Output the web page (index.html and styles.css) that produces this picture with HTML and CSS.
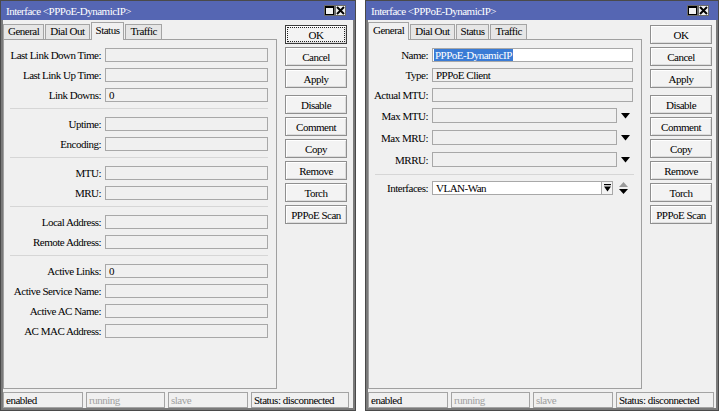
FILE: index.html
```html
<!DOCTYPE html>
<html>
<head>
<meta charset="utf-8">
<title>Interface PPPoE-DynamicIP</title>
<link rel="stylesheet" href="styles.css">
</head>
<body>
<div class="desk">

  <div class="window win-left">
    <div class="titlebar">
      <span class="title">Interface &lt;PPPoE-DynamicIP&gt;</span>
      <div class="tbtns">
        <span class="tb"><svg width="9" height="9" viewBox="0 0 9 9"><rect x="0.5" y="0.5" width="8" height="8" fill="none" stroke="#000"/><rect x="0" y="0" width="9" height="2" fill="#000"/></svg></span>
        <span class="tb"><svg width="9" height="9" viewBox="0 0 9 9"><path d="M1 1L8 8M8 1L1 8" stroke="#000" stroke-width="2"/></svg></span>
      </div>
    </div>
    <div class="client">
      <div class="main">
        <div class="leftcol">
          <div class="tabs">
            <span class="tab">General</span>
            <span class="tab">Dial Out</span>
            <span class="tab active">Status</span>
            <span class="tab">Traffic</span>
          </div>
          <div class="panel panel-status">
            <div class="row"><span class="lbl">Last Link Down Time:</span><span class="field"></span></div>
            <div class="row"><span class="lbl">Last Link Up Time:</span><span class="field"></span></div>
            <div class="row"><span class="lbl">Link Downs:</span><span class="field">0</span></div>
            <div class="sep"></div>
            <div class="row"><span class="lbl">Uptime:</span><span class="field"></span></div>
            <div class="row"><span class="lbl">Encoding:</span><span class="field"></span></div>
            <div class="sep"></div>
            <div class="row"><span class="lbl">MTU:</span><span class="field"></span></div>
            <div class="row"><span class="lbl">MRU:</span><span class="field"></span></div>
            <div class="sep"></div>
            <div class="row"><span class="lbl">Local Address:</span><span class="field"></span></div>
            <div class="row"><span class="lbl">Remote Address:</span><span class="field"></span></div>
            <div class="sep"></div>
            <div class="row"><span class="lbl">Active Links:</span><span class="field">0</span></div>
            <div class="row"><span class="lbl">Active Service Name:</span><span class="field"></span></div>
            <div class="row"><span class="lbl">Active AC Name:</span><span class="field"></span></div>
            <div class="row"><span class="lbl">AC MAC Address:</span><span class="field"></span></div>
          </div>
        </div>
        <div class="buttons">
          <button class="btn focused">OK</button>
          <button class="btn">Cancel</button>
          <button class="btn">Apply</button>
          <button class="btn gap">Disable</button>
          <button class="btn">Comment</button>
          <button class="btn">Copy</button>
          <button class="btn">Remove</button>
          <button class="btn">Torch</button>
          <button class="btn">PPPoE Scan</button>
        </div>
      </div>
      <div class="statusbar">
        <span class="cell">enabled</span>
        <span class="cell dim">running</span>
        <span class="cell dim">slave</span>
        <span class="cell">Status: disconnected</span>
      </div>
    </div>
  </div>

  <div class="window win-right">
    <div class="titlebar">
      <span class="title">Interface &lt;PPPoE-DynamicIP&gt;</span>
      <div class="tbtns">
        <span class="tb"><svg width="9" height="9" viewBox="0 0 9 9"><rect x="0.5" y="0.5" width="8" height="8" fill="none" stroke="#000"/><rect x="0" y="0" width="9" height="2" fill="#000"/></svg></span>
        <span class="tb"><svg width="9" height="9" viewBox="0 0 9 9"><path d="M1 1L8 8M8 1L1 8" stroke="#000" stroke-width="2"/></svg></span>
      </div>
    </div>
    <div class="client">
      <div class="main">
        <div class="leftcol">
          <div class="tabs">
            <span class="tab active first">General</span>
            <span class="tab">Dial Out</span>
            <span class="tab">Status</span>
            <span class="tab">Traffic</span>
          </div>
          <div class="panel panel-general">
            <div class="row"><span class="lbl">Name:</span><span class="field edit wide"><span class="sel">PPPoE-DynamicIP</span></span></div>
            <div class="row"><span class="lbl">Type:</span><span class="field wide">PPPoE Client</span></div>
            <div class="row"><span class="lbl">Actual MTU:</span><span class="field wide"></span></div>
            <div class="row drop"><span class="lbl">Max MTU:</span><span class="field dd"></span><span class="arrow"><svg width="9" height="6" viewBox="0 0 9 6"><path d="M0 0H9L4.5 5.5Z" fill="#000"/></svg></span></div>
            <div class="row drop"><span class="lbl">Max MRU:</span><span class="field dd"></span><span class="arrow"><svg width="9" height="6" viewBox="0 0 9 6"><path d="M0 0H9L4.5 5.5Z" fill="#000"/></svg></span></div>
            <div class="row drop"><span class="lbl">MRRU:</span><span class="field dd"></span><span class="arrow"><svg width="9" height="6" viewBox="0 0 9 6"><path d="M0 0H9L4.5 5.5Z" fill="#000"/></svg></span></div>
            <div class="sep sep-r"></div>
            <div class="row"><span class="lbl">Interfaces:</span><span class="field edit ifc">VLAN-Wan</span><span class="ddbox"><svg width="7" height="8" viewBox="0 0 7 8"><path d="M0 0H7V1.2H0Z" fill="#000"/><path d="M0 2.5H7L3.5 7.5Z" fill="#000"/></svg></span><span class="arrow updown"><svg width="9" height="12" viewBox="0 0 9 12"><path d="M4.5 0L9 5H0Z" fill="#9a9a9a"/><path d="M0 7H9L4.5 12Z" fill="#000"/></svg></span></div>
          </div>
        </div>
        <div class="buttons">
          <button class="btn">OK</button>
          <button class="btn">Cancel</button>
          <button class="btn">Apply</button>
          <button class="btn gap">Disable</button>
          <button class="btn">Comment</button>
          <button class="btn">Copy</button>
          <button class="btn">Remove</button>
          <button class="btn">Torch</button>
          <button class="btn">PPPoE Scan</button>
        </div>
      </div>
      <div class="statusbar">
        <span class="cell">enabled</span>
        <span class="cell dim">running</span>
        <span class="cell dim">slave</span>
        <span class="cell">Status: disconnected</span>
      </div>
    </div>
  </div>

</div>
</body>
</html>
```

FILE: styles.css
```css
* { box-sizing: border-box; }

body {
  margin: 0;
  background: #ffffff;
  font-family: "Liberation Serif", "DejaVu Serif", serif;
  font-size: 11px;
  letter-spacing: -0.5px;
  color: #000;
}

.desk {
  display: flex;
  gap: 9px;
}

.window {
  height: 411px;
  display: flex;
  flex-direction: column;
  border: 1px solid #4a4a4a;
  background: #f0f0f0;
}
.win-left { width: 356px; }
.win-right { width: 354px; }

.titlebar {
  flex: none;
  height: 19px;
  background: #5566b3;
  color: #fff;
  display: flex;
  align-items: center;
  justify-content: space-between;
  padding: 0 9px 0 5px;
}
.title { white-space: nowrap; }

.tbtns { display: flex; }
.tb {
  width: 11px;
  height: 11px;
  background: #f2f2f2;
  border: 1px solid #6a6a6a;
  display: flex;
  align-items: center;
  justify-content: center;
}

.client {
  flex: 1;
  display: flex;
  flex-direction: column;
  border: 2px solid #7a7a7a;
  border-top: 0;
  padding-top: 2px;
}

.main {
  flex: 1;
  display: flex;
  min-height: 0;
}

.leftcol {
  width: 274px;
  display: flex;
  flex-direction: column;
}

.tabs {
  height: 17px;
  display: flex;
  align-items: flex-end;
  flex: none;
}
.tab {
  height: 15px;
  line-height: 13px;
  padding: 0 4px;
  margin-right: 1px;
  border: 1px solid #a4a4a4;
  border-bottom: 0;
  background: #e6e6e6;
  white-space: nowrap;
}
.tab.active {
  height: 18px;
  line-height: 15px;
  margin-bottom: -1px;
  background: #f0f0f0;
  position: relative;
  z-index: 1;
}

.panel {
  flex: 1;
  border: 1px solid #a0a0a0;
  background: #f0f0f0;
  padding: 8px 8px 0 0;
}

.row {
  display: flex;
  align-items: center;
  height: 14px;
  margin-bottom: 6px;
}
.lbl {
  flex: none;
  width: 97px;
  text-align: right;
  margin-right: 4px;
  white-space: nowrap;
}
.field {
  flex: none;
  width: 163px;
  height: 14px;
  line-height: 12px;
  border: 1px solid #a8a8a8;
  background: #f0f0f0;
  padding-left: 3px;
  white-space: nowrap;
  overflow: hidden;
}
.field.edit { background: #ffffff; }

.sep {
  height: 1px;
  background: #d6d6d6;
  margin: 0 0 8px 6px;
}

/* General tab */
.panel-general { padding-right: 7px; }
.panel-general .lbl { width: 59px; }
.panel-general .field.wide { width: 201px; }
.panel-general .row.drop {
  height: 15px;
  margin-bottom: 7px;
}
.panel-general .row.drop .field { height: 15px; }
.panel-general .field.dd { width: 185px; }
.panel-general .field.ifc { width: 170px; }
.sel {
  background: #3a7bd5;
  color: #fff;
  padding: 0 1px;
  margin-left: -2px;
}
.arrow {
  flex: none;
  width: 16px;
  display: flex;
  justify-content: center;
  align-items: center;
}
.ddbox {
  flex: none;
  width: 11px;
  height: 14px;
  border: 1px solid #a8a8a8;
  border-left: 0;
  background: #f4f4f4;
  display: flex;
  align-items: center;
  justify-content: center;
}
.arrow.updown { width: 21px; }
.sep-r {
  margin-top: 3px;
  margin-bottom: 6px;
  margin-right: 0;
}

.buttons {
  width: 62px;
  margin-left: 8px;
  padding-top: 3px;
  display: flex;
  flex-direction: column;
  gap: 3px;
}
.btn {
  height: 19px;
  padding: 0;
  font: inherit;
  letter-spacing: inherit;
  color: #000;
  background: #f3f3f3;
  border: 1px solid #8f8f8f;
  box-shadow: inset 1px 1px 0 #ffffff, inset -1px -1px 0 #dcdcdc;
}
.btn.gap { margin-top: 4px; }
.btn.focused {
  border-color: #3c3c3c;
  outline: 1px dotted #222;
  outline-offset: -3px;
}

.statusbar {
  flex: none;
  height: 16px;
  margin-top: 3px;
  display: grid;
  grid-template-columns: 80px 79px 80px 98px;
  column-gap: 3px;
}
.cell {
  border: 1px solid #a4a4a4;
  background: #f0f0f0;
  padding-left: 2px;
  line-height: 14px;
  white-space: nowrap;
}
.cell.dim { color: #a0a0a0; }
```
